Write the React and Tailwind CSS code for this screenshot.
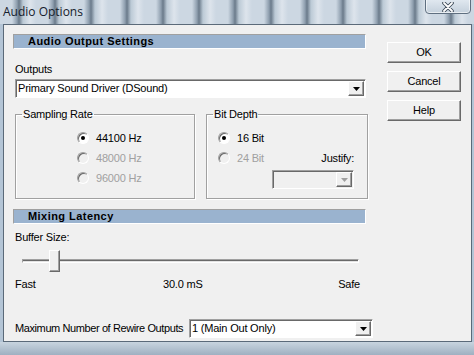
import React from "react";

const FONT = "font-['Liberation_Sans',Arial,sans-serif]";

function Radio({ label, checked, disabled }) {
  return (
    <div className="flex items-center h-[20px]">
      <span
        className={`w-[12px] h-[12px] rounded-full flex items-center justify-center border border-t-[#a0a0a0] border-l-[#a0a0a0] border-b-white border-r-white shadow-[inset_1px_1px_0_#696969] ${
          disabled ? "bg-[#f0f0f0]" : "bg-white"
        }`}
      >
        {checked && <span className="w-[4px] h-[4px] rounded-full bg-black" />}
      </span>
      <span className={`ml-[7px] ${disabled ? "text-[#a0a0a0]" : "text-black"}`}>{label}</span>
    </div>
  );
}

function Arrow({ color = "#000" }) {
  return (
    <svg width="7" height="4" viewBox="0 0 7 4">
      <path d="M0 0h7L3.5 4z" fill={color} />
    </svg>
  );
}

function Select({ value, disabled, className }) {
  return (
    <div
      className={`flex items-stretch h-[19px] border border-t-[#a0a0a0] border-l-[#a0a0a0] border-b-white border-r-white shadow-[inset_1px_1px_0_#696969] ${
        disabled ? "bg-[#f0f0f0]" : "bg-white"
      } ${className}`}
    >
      <div className="flex-1 pl-[2px] pt-[1px] leading-[15px] truncate">{value}</div>
      <div className="w-[16px] mt-[1px] mb-[1px] mr-[1px] flex items-center justify-center bg-[#f0f0f0] border border-t-white border-l-white border-r-[#696969] border-b-[#696969] shadow-[inset_-1px_-1px_0_#a0a0a0]">
        <Arrow color={disabled ? "#a0a0a0" : "#000"} />
      </div>
    </div>
  );
}

function Button({ children }) {
  return (
    <button className="w-[74px] h-[21px] bg-[#f0f0f0] border border-t-white border-l-white border-r-[#696969] border-b-[#696969] shadow-[inset_-1px_-1px_0_#a0a0a0] text-[11px] leading-[17px] text-black">
      {children}
    </button>
  );
}

function SectionHeader({ title }) {
  return (
    <div className="w-[353px] h-[15px] bg-[#9ab3cf] border border-t-[#a0a0a0] border-l-[#a0a0a0] border-b-white border-r-white pl-[14px] text-[11px] leading-[13px] font-bold tracking-[0.45px] text-black">
      {title}
    </div>
  );
}

function GroupBox({ title, className, children }) {
  return (
    <fieldset
      className={`border border-[#a0a0a0] shadow-[inset_1px_1px_0_#fff,1px_1px_0_#fff] ${className}`}
    >
      <legend className="ml-[6px] px-[1px] h-[13px] leading-[13px]">{title}</legend>
      {children}
    </fieldset>
  );
}

export default function App() {
  return (
    <div className={`w-[474px] h-[355px] overflow-hidden flex flex-col bg-[#b4c5d6] text-[11px] tracking-[-0.2px] ${FONT}`}>
      {/* title bar */}
      <div className="h-[24px] flex items-start justify-between tracking-normal bg-[repeating-linear-gradient(90deg,#ccd7e2_0px,#ccd7e2_12px,#8e9eae_17px,#6a7a8a_19px,#bccad6_23px,#dde4ec_30px,#ccd7e2_36px)]">
        <span className="ml-[3px] mt-[4px] text-[12px] leading-[16px] text-[#15202c] font-['Open_Sans',sans-serif]">
          Audio Options
        </span>
        <div className="mr-[3px] mt-[-3px] w-[46px] h-[17px] rounded-b-[4px] border border-[#5f6f80] bg-[linear-gradient(#e4ebf2,#c4d0dc)] shadow-[inset_0_0_0_1px_rgba(255,255,255,0.6)] flex items-center justify-center">
          <svg width="12" height="10" viewBox="0 0 12 10" className="mt-[3px]">
            <path d="M2 1l8 8M10 1L2 9" stroke="#3b4856" strokeWidth="3.6" strokeLinecap="round" />
            <path d="M2 1l8 8M10 1L2 9" stroke="#fff" strokeWidth="1.8" strokeLinecap="round" />
          </svg>
        </div>
      </div>

      {/* client area */}
      <div className="ml-[3px] mr-[2px] h-[318px] bg-[#f0f0f0] border border-[#5b6a79] flex pl-[9px] pt-[9px] text-black">
        <div className="w-[361px] flex flex-col">
          <SectionHeader title="Audio Output Settings" />
          <div className="mt-[14px] ml-[2px] h-[13px] leading-[13px]">Outputs</div>
          <Select value="Primary Sound Driver (DSound)" className="mt-[3px] ml-[2px] w-[351px]" />

          <div className="flex mt-[10px] ml-[2px]">
            <GroupBox title="Sampling Rate" className="w-[180px] h-[91px]">
              <div className="pl-[61px] pt-[7px]">
                <Radio label="44100 Hz" checked />
                <Radio label="48000 Hz" disabled />
                <Radio label="96000 Hz" disabled />
              </div>
            </GroupBox>
            <GroupBox title="Bit Depth" className="ml-[11px] w-[162px] h-[91px]">
              <div className="pl-[11px] pt-[7px] pr-[13px]">
                <Radio label="16 Bit" checked />
                <div className="flex justify-between items-center">
                  <Radio label="24 Bit" disabled />
                  <span>Justify:</span>
                </div>
                <div className="flex justify-end mt-[2px]">
                  <Select value="" disabled className="w-[82px]" />
                </div>
              </div>
            </GroupBox>
          </div>

          <div className="mt-[10px]">
            <SectionHeader title="Mixing Latency" />
          </div>
          <div className="mt-[7px] ml-[2px] h-[13px] leading-[13px]">Buffer Size:</div>
          <div className="relative mt-[6px] ml-[9px] w-[337px] h-[22px] flex items-center">
            <div className="w-full h-[4px] border border-t-[#a0a0a0] border-l-[#a0a0a0] border-b-white border-r-white bg-[#e3e3e3] shadow-[inset_0_1px_0_#696969]" />
            <div className="absolute left-[27px] top-0 w-[11px] h-[22px] bg-[#f0f0f0] border border-t-white border-l-white border-r-[#696969] border-b-[#696969] shadow-[inset_-1px_-1px_0_#a0a0a0]" />
          </div>
          <div className="mt-[6px] ml-[2px] w-[345px] h-[13px] leading-[13px] flex">
            <span className="w-[148px]">Fast</span>
            <span className="flex-1">30.0 mS</span>
            <span>Safe</span>
          </div>

          <div className="mt-[28px] ml-[2px] flex items-center">
            <span className="w-[174px] shrink-0 min-w-0 whitespace-nowrap tracking-[-0.4px]">
              Maximum Number of Rewire Outputs
            </span>
            <Select value="1 (Main Out Only)" className="w-[184px]" />
          </div>
        </div>

        <div className="ml-[13px] mt-[8px] flex flex-col gap-[8px]">
          <Button>OK</Button>
          <Button>Cancel</Button>
          <Button>Help</Button>
        </div>
      </div>

      {/* bottom frame */}
      <div className="flex-1 bg-[linear-gradient(#c8d4df,#9fb0c1)]" />
    </div>
  );
}
